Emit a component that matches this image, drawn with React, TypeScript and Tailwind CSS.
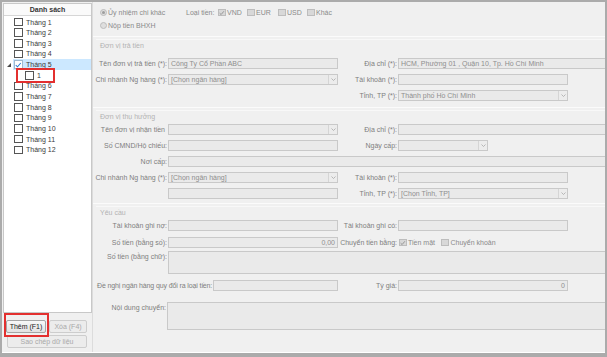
import React from "react";

const months = [
  "Tháng 1",
  "Tháng 2",
  "Tháng 3",
  "Tháng 4",
  "Tháng 5",
  "Tháng 6",
  "Tháng 7",
  "Tháng 8",
  "Tháng 9",
  "Tháng 10",
  "Tháng 11",
  "Tháng 12",
];

function Chevron() {
  return (
    <svg width="5" height="3" viewBox="0 0 5 3" className="block">
      <path d="M0.5 0.5 L2.5 2.5 L4.5 0.5" fill="none" stroke="#a9a9a9" strokeWidth="0.8" />
    </svg>
  );
}

function Tick({ color }: { color: string }) {
  return (
    <svg width="7" height="6" viewBox="0 0 7 6" className="block">
      <path d="M0.8 3.2 L2.7 5 L6.2 0.8" fill="none" stroke={color} strokeWidth="1.1" />
    </svg>
  );
}

function Field({
  className = "w-[170px] h-[11px]",
  text = "",
  right = false,
  combo = false,
}: {
  className?: string;
  text?: string;
  right?: boolean;
  combo?: boolean;
}) {
  return (
    <div className={`flex shrink-0 items-stretch border border-[#c9c9c9] bg-[#eaeaea] ${className}`}>
      <span
        className={`flex flex-1 items-center overflow-hidden whitespace-nowrap px-[2px] text-[#8e8e8e] ${
          right ? "justify-end" : ""
        }`}
      >
        {text}
      </span>
      {combo && (
        <span className="flex w-[9px] items-center justify-center border-l border-[#d5d5d5] bg-[#ececec]">
          <Chevron />
        </span>
      )}
    </div>
  );
}

function Label({ children, className = "w-[75px]" }: { children?: React.ReactNode; className?: string }) {
  return (
    <div className={`shrink-0 whitespace-nowrap pr-[1px] text-right text-[#7e7e7e] ${className}`}>{children}</div>
  );
}

function GrayCheck({ checked = false }: { checked?: boolean }) {
  return (
    <span className="flex h-[7.5px] w-[7.5px] shrink-0 items-center justify-center border border-[#bdbdbd] bg-[#d8d8d8]">
      {checked && <Tick color="#8c8c8c" />}
    </span>
  );
}

function Radio({ on = false }: { on?: boolean }) {
  return (
    <span className="flex h-[7px] w-[7px] shrink-0 items-center justify-center rounded-full border border-[#bcbcbc] bg-[#dedede]">
      {on && <span className="h-[3px] w-[3px] rounded-full bg-[#9d9d9d]" />}
    </span>
  );
}

function Caption({ children }: { children: React.ReactNode }) {
  return (
    <div className="border-t border-[#fbfbfb]">
      <div className="ml-[3px] mt-[2px] flex h-[12px] items-center border-t border-[#f8f8f8] pl-[4px] text-[#b3b3b3]">
        {children}
      </div>
    </div>
  );
}

export default function App() {
  return (
    <div className="relative h-[357px] w-[607px] overflow-hidden border-2 border-b-[4px] border-[#ababab] bg-[#f0f0f0] font-['Liberation_Sans',sans-serif] text-[7px] leading-none">
      <div className="flex h-full w-full border-b border-white">
        {/* Danh sách */}
        <aside className="flex w-[91px] shrink-0 flex-col border-r border-[#dcdcdc]">
          <div className="ml-[1px] mt-[1px] flex h-[310px] flex-col border border-[#c8c8c8] bg-white">
            <div className="flex h-[12px] shrink-0 items-center justify-center border-b border-[#d6d6d6] bg-[#fafafa] font-bold text-[#333]">
              Danh sách
            </div>
            <div className="pt-[0.7px] text-[#3a3a3a]">
              {months.map((m, i) => (
                <React.Fragment key={m}>
                  <div className="flex h-[10.67px] items-center">
                    <span className="flex w-[9px] shrink-0 items-center justify-center">
                      {i === 4 && (
                        <svg width="4" height="4" viewBox="0 0 4 4" className="block">
                          <polygon points="4,0 4,4 0,4" fill="#4a4a4a" />
                        </svg>
                      )}
                    </span>
                    <div
                      className={`flex h-full flex-1 items-center gap-[3.5px] pl-[1px] ${
                        i === 4 ? "bg-[#cce8ff]" : ""
                      }`}
                    >
                      <span
                        className={`flex h-[8.5px] w-[8.5px] shrink-0 items-center justify-center border bg-white ${
                          i === 4 ? "border-[#9fb9cf]" : "border-[#555]"
                        }`}
                      >
                        {i === 4 && <Tick color="#2a7fd4" />}
                      </span>
                      <span>{m}</span>
                    </div>
                  </div>
                  {i === 4 && (
                    <div className="flex h-[10.67px] items-center">
                      <span className="w-[9px] shrink-0" />
                      <div className="flex h-full flex-1 items-center gap-[3.5px] pl-[12px]">
                        <span className="h-[8.5px] w-[8.5px] shrink-0 border border-[#555] bg-white" />
                        <span>1</span>
                      </div>
                    </div>
                  )}
                </React.Fragment>
              ))}
            </div>
          </div>

          <div className="mt-[7px] flex gap-[3px] pl-[4px]">
            <button className="flex h-[13px] w-[40px] items-center justify-center rounded-[2px] border border-[#a5a5a5] bg-gradient-to-b from-[#f8f8f8] to-[#e2e2e2] text-[#222]">
              Thêm (F1)
            </button>
            <button className="flex h-[13px] w-[38px] items-center justify-center rounded-[2px] border border-[#cdcdcd] bg-[#ececec] text-[#a9a9a9]">
              Xóa (F4)
            </button>
          </div>
          <button className="ml-[5px] mt-[2px] flex h-[13px] w-[80px] items-center justify-center rounded-[2px] border border-[#cdcdcd] bg-[#ececec] text-[#a9a9a9]">
            Sao chép dữ liệu
          </button>
        </aside>

        {/* Form */}
        <main className="flex min-w-0 flex-1 flex-col overflow-hidden">
          <div className="h-[34px] shrink-0 pt-[4px] text-[#8a8a8a]">
            <div className="flex h-[13px] items-center pl-[7px]">
              <div className="flex w-[86px] items-center gap-[1px]">
                <Radio on />
                <span>Ủy nhiệm chi khác</span>
              </div>
              <span className="w-[32px]">Loại tiền:</span>
              <div className="flex w-[29px] items-center gap-[1.5px]">
                <GrayCheck checked />
                <span>VND</span>
              </div>
              <div className="flex w-[31px] items-center gap-[1.5px]">
                <GrayCheck />
                <span>EUR</span>
              </div>
              <div className="flex w-[29px] items-center gap-[1.5px]">
                <GrayCheck />
                <span>USD</span>
              </div>
              <div className="flex items-center gap-[1.5px]">
                <GrayCheck />
                <span>Khác</span>
              </div>
            </div>
            <div className="flex h-[13px] items-center gap-[1px] pl-[7px]">
              <Radio />
              <span>Nộp tiền BHXH</span>
            </div>
          </div>

          {/* Đơn vị trả tiền */}
          <section className="h-[71px] shrink-0">
            <Caption>Đơn vị trả tiền</Caption>
            <div className="mt-[6.5px] flex flex-col gap-[5.3px]">
              <div className="flex items-center">
                <Label>Tên đơn vị trả tiền (*):</Label>
                <Field text="Công Ty Cổ Phần ABC" />
                <Label className="w-[60px]">Địa chỉ (*):</Label>
                <Field className="h-[11px] w-[260px]" text="HCM, Phường 01 , Quận 10, Tp. Hồ Chí Minh" />
              </div>
              <div className="flex items-center">
                <Label>Chi nhánh Ng hàng (*):</Label>
                <Field text="[Chọn ngân hàng]" combo />
                <Label className="w-[60px]">Tài khoản (*):</Label>
                <Field />
              </div>
              <div className="flex items-center">
                <div className="w-[245px] shrink-0" />
                <Label className="w-[60px]">Tỉnh, TP (*):</Label>
                <Field text="Thành phố Hồ Chí Minh" combo />
              </div>
            </div>
          </section>

          {/* Đơn vị thụ hưởng */}
          <section className="h-[96px] shrink-0">
            <Caption>Đơn vị thụ hưởng</Caption>
            <div className="mt-[2px] flex flex-col gap-[5px]">
              <div className="flex items-center">
                <Label className="w-[75px] pr-[3px]">Tên đơn vị nhận tiền</Label>
                <Field combo />
                <Label className="w-[60px]">Địa chỉ (*):</Label>
                <Field className="h-[11px] w-[260px]" />
              </div>
              <div className="flex items-center">
                <Label>Số CMND/Hộ chiếu:</Label>
                <Field />
                <Label className="w-[60px]">Ngày cấp:</Label>
                <Field className="h-[11px] w-[90px]" combo />
              </div>
              <div className="flex items-center">
                <Label>Nơi cấp:</Label>
                <Field className="h-[11px] w-[460px]" />
              </div>
              <div className="flex items-center">
                <Label>Chi nhánh Ng hàng (*):</Label>
                <Field text="[Chọn ngân hàng]" combo />
                <Label className="w-[60px]">Tài khoản (*):</Label>
                <Field />
              </div>
              <div className="flex items-center">
                <Label />
                <Field />
                <Label className="w-[60px]">Tỉnh, TP (*):</Label>
                <Field text="[Chọn Tỉnh, TP]" combo />
              </div>
            </div>
          </section>

          {/* Yêu cầu */}
          <section className="flex-1">
            <Caption>Yêu cầu</Caption>
            <div className="mt-[2px] flex items-center">
              <Label>Tài khoản ghi nợ:</Label>
              <Field />
              <Label className="w-[60px]">Tài khoản ghi có:</Label>
              <Field />
            </div>
            <div className="mt-[6px] flex items-center">
              <Label>Số tiền (bằng số):</Label>
              <Field text="0,00" right />
              <Label className="w-[60px]">Chuyển tiền bằng:</Label>
              <div className="ml-[1px] flex w-[42px] items-center gap-[1.5px] text-[#8a8a8a]">
                <GrayCheck checked />
                <span>Tiền mặt</span>
              </div>
              <div className="flex items-center gap-[2px] text-[#8a8a8a]">
                <GrayCheck />
                <span>Chuyển khoản</span>
              </div>
            </div>
            <div className="mt-[3px] flex items-start">
              <Label className="w-[75px] pt-[1.5px]">Số tiền (bằng chữ):</Label>
              <Field className="h-[23px] w-[460px]" />
            </div>
            <div className="mt-[6px] flex items-center">
              <div className="w-[120px] shrink-0 whitespace-nowrap pl-[4px] tracking-[-0.12px] text-[#7e7e7e]">
                Đề nghị ngân hàng quy đổi ra loại tiền:
              </div>
              <Field className="h-[11px] w-[125px]" />
              <Label className="w-[60px]">Tỷ giá:</Label>
              <Field text="0" right />
            </div>
            <div className="mt-[11px] flex items-start">
              <Label className="w-[74px] pt-[1.5px]">Nội dung chuyển:</Label>
              <Field className="h-[28px] w-[460px]" />
            </div>
          </section>
        </main>
      </div>

      {/* red annotation boxes */}
      <div className="pointer-events-none absolute left-[13.7px] top-[66.3px] h-[14.4px] w-[39.3px] border-2 border-[#e3302f]" />
      <div className="pointer-events-none absolute left-[2px] top-[311px] h-[24px] w-[45px] border-2 border-[#e3302f]" />
    </div>
  );
}
